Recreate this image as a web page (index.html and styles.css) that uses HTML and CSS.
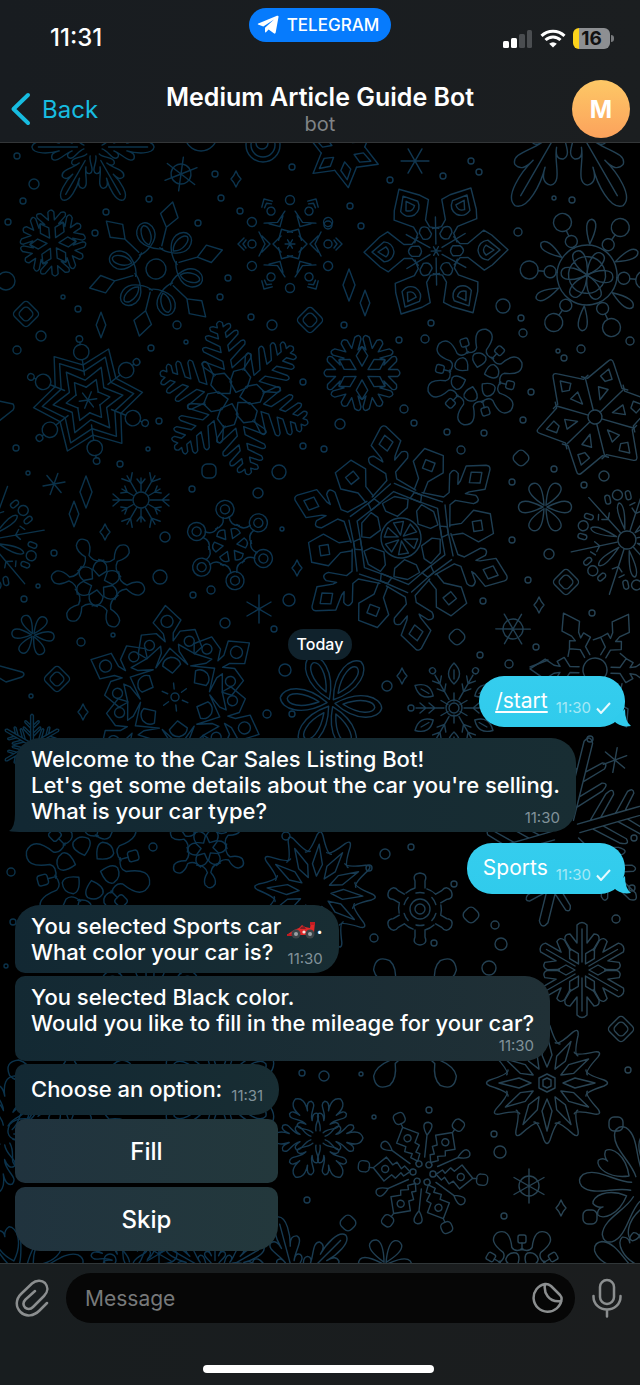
FILE: index.html
```html
<!DOCTYPE html>
<html lang="en">
<head>
<meta charset="utf-8">
<meta name="viewport" content="width=device-width, initial-scale=1">
<title>Medium Article Guide Bot</title>
<link rel="stylesheet" href="styles.css">
</head>
<body>
<div class="app">
  <header class="top">
    <div class="status">
      <span class="clock">11:31</span>
      <a class="island" href="#">
        <svg width="22" height="20" viewBox="0 0 22 20" aria-hidden="true"><path d="M1 9.600Q.2 8.900 1.300 8.500L20 .8Q21.800.2 21.500 2L18.700 17.600Q18.300 19.300 16.800 18.300L11.600 14.500L9 17.300Q8.100 17.900 8 16.600L8 12.800L17 4.500L6.300 11.400Z" fill="#fff"/></svg>
        TELEGRAM
      </a>
      <span class="indicators">
        <svg width="30" height="18" viewBox="0 0 30 18" aria-hidden="true"><rect x="0" y="11" width="6" height="7" rx="1.500" fill="#fff"/><rect x="8" y="8" width="6" height="10" rx="1.500" fill="#fff"/><rect x="16" y="4" width="6" height="14" rx="1.500" fill="#4a4d50"/><rect x="24" y="0" width="5" height="18" rx="1.500" fill="#4a4d50"/></svg>
        <svg width="26" height="19" viewBox="0 0 26 19" aria-hidden="true"><path d="M13 18.500L9.200 14.700A5.400 5.400 0 0 1 16.800 14.700Z" fill="#fff"/><g fill="none" stroke="#fff" stroke-width="3"><path d="M1.500 6.800A16.500 16.500 0 0 1 24.500 6.800"/><path d="M5.500 11A10.700 10.700 0 0 1 20.500 11"/></g></svg>
        <span class="battery">16</span>
      </span>
    </div>
    <nav class="nav">
      <a class="back" href="#"><svg width="22" height="34" viewBox="0 0 22 34" aria-hidden="true"><path d="M18 3L3.500 17L18 31" fill="none" stroke="#17bce0" stroke-width="4" stroke-linecap="round" stroke-linejoin="round"/></svg>Back</a>
      <div class="heading"><h1>Medium Article Guide Bot</h1><p>bot</p></div>
      <button class="avatar" type="button">M</button>
    </nav>
  </header>

  <main class="chat">
    <svg class="wallpaper" viewBox="0 143 640 1120" preserveAspectRatio="xMidYMid slice" aria-hidden="true">
      <defs>
        <linearGradient id="tint" x1="0" y1=".3" x2="1" y2=".6"><stop offset="0" stop-color="#0a3148"/><stop offset=".45" stop-color="#0c3450"/><stop offset=".75" stop-color="#213f52"/><stop offset="1" stop-color="#2a4453"/></linearGradient>

        <!-- small marks -->
        <g id="wheel"><circle r="10"/><path d="M0 0V-17M0 0V17M0 0L15-8.500M0 0L-15 8.500M0 0L-15-8.500M0 0L15 8.500"/></g>
        <g id="aster"><path d="M0-14V14M-12-7L12 7M12-7L-12 7"/></g>
        <path id="spark" d="M0-8Q2-3 5 0Q2 3 0 8Q-2 3-5 0Q-2-3 0-8Z"/>
        <path id="shard" d="M0-16L6 0L0 16L-6 0Z"/>
        <rect id="tile" x="-7" y="-7" width="14" height="14" rx="5"/>
        <g id="gem"><rect x="-10" y="-10" width="20" height="20" rx="4" transform="rotate(45)"/><rect x="-6" y="-6" width="12" height="12" rx="4" transform="rotate(45)"/></g>

        <!-- one arm of each flake, pointing up -->
        <g id="a-chunk"><path d="M-11-20L-7-19L-14-26Q-16-31-10-30L-3-23V-31Q0-35 3-31V-23L10-30Q16-31 14-26L7-19L11-20"/><path transform="rotate(30)" d="M0-6L-5-15L0-23L5-15Z"/></g>
        <g id="a-knot"><path d="M-12-18C-6-18 10-26 9-38C7-51-7-51-9-38C-10-26 6-18 12-18M0-25C7-31 5-44 0-45C-5-44-7-31 0-25Z"/><g transform="rotate(30)"><path d="M0-24V-43M0-43L-9-55L0-69L9-55Z"/></g></g>
        <g id="a-cheron"><circle cy="-38" r="4"/><path d="M-8-28L0-20L8-28M-12-31L0-25M12-31L0-25M-6-46L0-52L6-46M-4-44L0-47L4-44M-8-9L0-17L8-9"/><circle cy="-44" r="4.500" transform="rotate(30)"/></g>
        <g id="a-star"><path d="M-16-28L0-50L16-28M-13-23L0-42L13-23M-9-16L0-32L9-16M-6-10L0-20L6-10M0 0V-8"/><g transform="rotate(30)"><path d="M0-23V-37M0-51V-53"/><circle cy="-44" r="7"/><circle cy="-56" r="3"/></g></g>
        <g id="a-fern"><path d="M14-26L24-36Q27-41 22-41L4-30V-38L21-51Q23-56 18-55L4-47V-53L16-62Q18-67 13-66L4-61V-66L10-70Q12-75 7-74L3-72V-76Q0-80-3-76V-72L-7-74Q-12-75-10-70L-4-66V-61L-13-66Q-18-67-16-62L-4-53V-47L-18-55Q-23-56-21-51L-4-38V-30L-22-41Q-27-41-24-36L-14-26"/><path transform="rotate(30)" d="M0-6L-9-14V-25L0-31L9-25V-14Z"/></g>
        <g id="a-hexstar"><path d="M-11-19L0-38L11-19M0-12L-5-20L0-30L5-20Z"/></g>
        <g id="a-shield"><path d="M-7-24V-32L-20-48L-15-56L0-72L15-56L20-48L7-32V-24L14-18M-7-24L-14-18M0-64L-10-52Q-9-43 0-42Q9-43 10-52ZM0-58L-5-50Q0-45 5-50ZM-5-17Q0-12 5-17V-24Q0-31-5-24Z"/><path transform="rotate(30)" d="M0-7V-34"/></g>
        <g id="a-beads"><circle cy="-37" r="6"/><circle cy="-58" r="9"/><path d="M0-30V-31M0-43V-49M0 0C-8-13-8-26 0-26S8-13 0 0M9-16A18 18 0 0 0-9-16"/><path transform="rotate(30)" d="M0-31Q-9-54 0-56Q9-54 0-31Z"/></g>
        <g id="a-lobe"><path d="M-14-22Q-5-23-5-29Q-13-47 0-49Q13-47 5-29Q5-23 14-22M0-10Q-9-17-6-22Q0-27 6-22Q9-17 0-10Z"/><g transform="rotate(30)"><path d="M0-25V-32"/><rect x="-4" y="-40" width="8" height="8" rx="2"/></g></g>
        <g id="a-point"><path d="M-24-35L-18-35L-3-57Q0-62 3-57L18-35L24-35M0-50L-6-41L0-37L6-41ZM-5-30L0-18L5-30Z"/><path transform="rotate(30)" d="M0-7V-39"/></g>
        <g id="a-fork"><path d="M0-9V-28M-6-28L0-21L6-28"/><path transform="rotate(30)" d="M0-9V-22M-4-21L0-16L4-21"/></g>
        <g id="a-dandelion"><path d="M0-10V-57M-5-32L0-28L5-32M-4-38L-8-34"/><g transform="rotate(30)"><path d="M0-11Q-6-35 0-38Q6-35 0-11Z"/><circle cy="-46" r="5"/><rect x="-13" y="-48" width="5" height="9" rx="2.500"/><rect x="8" y="-48" width="5" height="9" rx="2.500"/></g></g>
        <g id="a-bulb"><path d="M-14-19Q-4-20-2-29Q-8-37-6-43Q0-51 6-43Q8-37 2-29Q4-20 14-19"/><path transform="rotate(30)" d="M0-7L-7-13Q-7-21 0-23Q7-21 7-13Z"/></g>
        <g id="a-ring"><path d="M-12-18Q-3-19-3-28M3-28Q3-19 12-18"/><circle cy="-36" r="9"/><circle cy="-36" r="4.500"/><path transform="rotate(30)" d="M0-7L-5-15Q0-20 5-15Z"/></g>
        <path id="a-petal" d="M0-2Q-9-20-4-25Q0-28 4-25Q9-20 0-2Z"/>
        <g id="a-royal"><path d="M-5-59V-66L-19-78Q-22-86-14-85L-6-78L-7-82L-15-96L-3-112Q0-115 3-112L15-96L7-82L6-78L14-85Q22-86 19-78L5-66V-59L22-45M-5-59L-22-45M0-104L-7-96L0-88L7-96ZM-2-55L-27-39L-25-32L0-47L25-32L27-39L2-55"/><path d="M0-22L-11-29L-13-37L0-42L13-37L11-29ZM0-3L-5-16H5Z"/><path transform="rotate(30)" d="M-5-50V-62L-16-76L-10-92H10L16-76L5-62V-50M-5-82H5V-73H-5Z"/></g>
        <g id="a-crown"><path d="M0-49L-16-31L-9-45V-52L-24-41L-32-47L-27-65L-12-65L-4-56L-5-64L-14-76L0-92L14-76L5-64L4-56L12-65L27-65L32-47L24-41L9-52V-45L16-31ZM0-24L-9-32Q-8-39 0-40Q8-39 9-32ZM0-8V-14"/><circle cy="-76" r="6"/><circle cx="-20" cy="-54" r="5"/><circle cx="20" cy="-54" r="5"/></g>
        <path id="a-bloom" d="M0-4C-17-28-11-49 0-51C11-49 17-28 0-4ZM0-12C-9-30-6-43 0-44C6-43 9-30 0-12Z"/>
        <g id="a-leaf"><path d="M0-24Q-11-34 0-45Q11-34 0-24ZM0-29V-38M0-7V-15"/><path transform="rotate(30)" d="M0-10V-38M-5-34L0-28L5-34M-5-25L0-19L5-25"/><circle cy="-43" r="3" transform="rotate(30)"/></g>
        <g id="a-block"><path d="M-3-16V-25L-12-31L-8-38L-3-35L-4-41L-10-50L0-65L10-50L4-41L3-35L8-38L12-31L3-25V-16M-12-31L-17-25"/></g>
        <g id="a-gear"><path d="M-5-21V-28Q-8-35 0-36Q8-35 5-28V-21M-5-21A22 22 0 0 0-14-16M-4-16A17 17 0 0 1 4-16"/></g>
        <g id="a-spike"><path d="M-4-12V-34L-21-51Q-28-53-23-44L-4-24M4-12V-34L21-51Q28-53 23-44L4-24M-4-34V-57L-17-69Q-22-70-20-64L-4-48M4-34V-57L17-69Q22-70 20-64L4-48M-4-57V-84Q0-92 4-84V-57"/></g>
        <g id="a-bar"><path d="M-11-20L-17-30Q-18-36-12-36L-5-27V-45Q0-50 5-45V-27L12-36Q18-36 17-30L11-20M0-8V-41"/><path transform="rotate(30)" d="M0-7L-5-16L0-25L5-16Z"/></g>
        <g id="a-twelve"><path d="M-13-39Q-9-38-3-57Q0-64 3-57Q9-38 13-39M0-16L-5-28L0-48L5-28Z"/></g>
        <g id="a-oak"><path d="M-3-14C-6-24-22-30-16-38Q-10-42-6-32C-10-44-26-56-18-63Q-9-66-6-52C-10-66-12-92 0-94C12-92 10-66 6-52Q9-66 18-63C26-56 10-44 6-32Q10-42 16-38C22-30 6-24 3-14M0-24V-84"/></g>
        <g id="a-plume"><path d="M-2-8C-5-17-15-18-13-24Q-9-28-4-20C-6-30-18-32-14-39Q-9-42-5-32Q-10-47 0-50Q10-47 5-32Q9-42 14-39C18-32 6-30 4-20Q9-28 13-24C15-18 5-17 2-8"/></g>
        <g id="a-totem"><circle cy="-10" r="3"/><path d="M0-13L-5-19L-2-22L-8-27L-5-31L-12-38L0-50L12-38L5-31L8-27L2-22L5-19ZM0-50V-54"/><circle cy="-38" r="3.500"/><rect x="-5" y="-65" width="11" height="11" rx="4"/><path transform="rotate(30)" d="M0-16V-38M0-38Q-8-50 0-51Q8-50 0-38Z"/></g>
        <g id="a-drop"><path d="M-4-14C-2-30-15-50-6-63Q0-69 6-63C15-50 2-30 4-14"/><path transform="rotate(30)" d="M0-20C-15-35-13-52-6-54Q0-52-1-46Q0-52 6-54C13-52 15-35 0-20Z"/></g>

        <!-- six-fold and twelve-fold flakes -->
        <g id="f-chunk"><use href="#a-chunk"/><use href="#a-chunk" transform="rotate(60)"/><use href="#a-chunk" transform="rotate(120)"/><use href="#a-chunk" transform="rotate(180)"/><use href="#a-chunk" transform="rotate(240)"/><use href="#a-chunk" transform="rotate(300)"/></g>
        <g id="f-knot"><circle r="10"/><use href="#a-knot"/><use href="#a-knot" transform="rotate(60)"/><use href="#a-knot" transform="rotate(120)"/><use href="#a-knot" transform="rotate(180)"/><use href="#a-knot" transform="rotate(240)"/><use href="#a-knot" transform="rotate(300)"/></g>
        <g id="f-cheron"><use href="#aster" transform="scale(.35)"/><use href="#a-cheron"/><use href="#a-cheron" transform="rotate(60)"/><use href="#a-cheron" transform="rotate(120)"/><use href="#a-cheron" transform="rotate(180)"/><use href="#a-cheron" transform="rotate(240)"/><use href="#a-cheron" transform="rotate(300)"/></g>
        <g id="f-star"><use href="#a-star"/><use href="#a-star" transform="rotate(60)"/><use href="#a-star" transform="rotate(120)"/><use href="#a-star" transform="rotate(180)"/><use href="#a-star" transform="rotate(240)"/><use href="#a-star" transform="rotate(300)"/></g>
        <g id="f-fern"><use href="#a-fern"/><use href="#a-fern" transform="rotate(60)"/><use href="#a-fern" transform="rotate(120)"/><use href="#a-fern" transform="rotate(180)"/><use href="#a-fern" transform="rotate(240)"/><use href="#a-fern" transform="rotate(300)"/></g>
        <g id="f-hexstar"><use href="#a-hexstar"/><use href="#a-hexstar" transform="rotate(60)"/><use href="#a-hexstar" transform="rotate(120)"/><use href="#a-hexstar" transform="rotate(180)"/><use href="#a-hexstar" transform="rotate(240)"/><use href="#a-hexstar" transform="rotate(300)"/></g>
        <g id="f-shield"><use href="#aster" transform="scale(.35)"/><use href="#a-shield"/><use href="#a-shield" transform="rotate(60)"/><use href="#a-shield" transform="rotate(120)"/><use href="#a-shield" transform="rotate(180)"/><use href="#a-shield" transform="rotate(240)"/><use href="#a-shield" transform="rotate(300)"/></g>
        <g id="f-beads"><circle r="30"/><use href="#a-beads"/><use href="#a-beads" transform="rotate(60)"/><use href="#a-beads" transform="rotate(120)"/><use href="#a-beads" transform="rotate(180)"/><use href="#a-beads" transform="rotate(240)"/><use href="#a-beads" transform="rotate(300)"/></g>
        <g id="f-lobe"><use href="#a-lobe"/><use href="#a-lobe" transform="rotate(60)"/><use href="#a-lobe" transform="rotate(120)"/><use href="#a-lobe" transform="rotate(180)"/><use href="#a-lobe" transform="rotate(240)"/><use href="#a-lobe" transform="rotate(300)"/></g>
        <g id="f-point"><circle r="7"/><use href="#a-point"/><use href="#a-point" transform="rotate(60)"/><use href="#a-point" transform="rotate(120)"/><use href="#a-point" transform="rotate(180)"/><use href="#a-point" transform="rotate(240)"/><use href="#a-point" transform="rotate(300)"/></g>
        <g id="f-fork"><circle r="8"/><use href="#a-fork"/><use href="#a-fork" transform="rotate(60)"/><use href="#a-fork" transform="rotate(120)"/><use href="#a-fork" transform="rotate(180)"/><use href="#a-fork" transform="rotate(240)"/><use href="#a-fork" transform="rotate(300)"/></g>
        <g id="f-dandelion"><circle r="9"/><use href="#a-dandelion"/><use href="#a-dandelion" transform="rotate(60)"/><use href="#a-dandelion" transform="rotate(120)"/><use href="#a-dandelion" transform="rotate(180)"/><use href="#a-dandelion" transform="rotate(240)"/><use href="#a-dandelion" transform="rotate(300)"/></g>
        <g id="f-bulb"><use href="#a-bulb"/><use href="#a-bulb" transform="rotate(60)"/><use href="#a-bulb" transform="rotate(120)"/><use href="#a-bulb" transform="rotate(180)"/><use href="#a-bulb" transform="rotate(240)"/><use href="#a-bulb" transform="rotate(300)"/></g>
        <g id="f-ring"><use href="#a-ring"/><use href="#a-ring" transform="rotate(60)"/><use href="#a-ring" transform="rotate(120)"/><use href="#a-ring" transform="rotate(180)"/><use href="#a-ring" transform="rotate(240)"/><use href="#a-ring" transform="rotate(300)"/></g>
        <g id="f-petal"><use href="#a-petal"/><use href="#a-petal" transform="rotate(60)"/><use href="#a-petal" transform="rotate(120)"/><use href="#a-petal" transform="rotate(180)"/><use href="#a-petal" transform="rotate(240)"/><use href="#a-petal" transform="rotate(300)"/></g>
        <g id="f-royal"><circle r="20"/><use href="#a-royal"/><use href="#a-royal" transform="rotate(60)"/><use href="#a-royal" transform="rotate(120)"/><use href="#a-royal" transform="rotate(180)"/><use href="#a-royal" transform="rotate(240)"/><use href="#a-royal" transform="rotate(300)"/></g>
        <g id="f-crown"><circle r="4"/><use href="#a-crown"/><use href="#a-crown" transform="rotate(60)"/><use href="#a-crown" transform="rotate(120)"/><use href="#a-crown" transform="rotate(180)"/><use href="#a-crown" transform="rotate(240)"/><use href="#a-crown" transform="rotate(300)"/></g>
        <g id="f-bloom"><use href="#a-bloom"/><use href="#a-bloom" transform="rotate(60)"/><use href="#a-bloom" transform="rotate(120)"/><use href="#a-bloom" transform="rotate(180)"/><use href="#a-bloom" transform="rotate(240)"/><use href="#a-bloom" transform="rotate(300)"/></g>
        <g id="f-leaf"><circle r="8"/><circle r="5"/><use href="#a-leaf"/><use href="#a-leaf" transform="rotate(60)"/><use href="#a-leaf" transform="rotate(120)"/><use href="#a-leaf" transform="rotate(180)"/><use href="#a-leaf" transform="rotate(240)"/><use href="#a-leaf" transform="rotate(300)"/></g>
        <g id="f-block"><circle r="12"/><use href="#a-block"/><use href="#a-block" transform="rotate(60)"/><use href="#a-block" transform="rotate(120)"/><use href="#a-block" transform="rotate(180)"/><use href="#a-block" transform="rotate(240)"/><use href="#a-block" transform="rotate(300)"/></g>
        <g id="f-gear"><circle r="10"/><circle r="5"/><use href="#a-gear"/><use href="#a-gear" transform="rotate(60)"/><use href="#a-gear" transform="rotate(120)"/><use href="#a-gear" transform="rotate(180)"/><use href="#a-gear" transform="rotate(240)"/><use href="#a-gear" transform="rotate(300)"/></g>
        <g id="f-spike"><use href="#a-spike"/><use href="#a-spike" transform="rotate(60)"/><use href="#a-spike" transform="rotate(120)"/><use href="#a-spike" transform="rotate(180)"/><use href="#a-spike" transform="rotate(240)"/><use href="#a-spike" transform="rotate(300)"/></g>
        <g id="f-bar"><use href="#a-bar"/><use href="#a-bar" transform="rotate(60)"/><use href="#a-bar" transform="rotate(120)"/><use href="#a-bar" transform="rotate(180)"/><use href="#a-bar" transform="rotate(240)"/><use href="#a-bar" transform="rotate(300)"/></g>
        <g id="half-twelve"><use href="#a-twelve"/><use href="#a-twelve" transform="rotate(60)"/><use href="#a-twelve" transform="rotate(120)"/><use href="#a-twelve" transform="rotate(180)"/><use href="#a-twelve" transform="rotate(240)"/><use href="#a-twelve" transform="rotate(300)"/></g>
        <g id="f-twelve"><path d="M0-9L8-5V5L0 9L-8 5V-5ZM0-5L4-3V3L0 5L-4 3V-3Z"/><use href="#half-twelve"/><use href="#half-twelve" transform="rotate(30)"/></g>
        <g id="f-oak"><use href="#a-oak"/><use href="#a-oak" transform="rotate(60)"/><use href="#a-oak" transform="rotate(120)"/><use href="#a-oak" transform="rotate(180)"/><use href="#a-oak" transform="rotate(240)"/><use href="#a-oak" transform="rotate(300)"/></g>
        <g id="f-plume"><use href="#a-plume"/><use href="#a-plume" transform="rotate(60)"/><use href="#a-plume" transform="rotate(120)"/><use href="#a-plume" transform="rotate(180)"/><use href="#a-plume" transform="rotate(240)"/><use href="#a-plume" transform="rotate(300)"/></g>
        <g id="f-totem"><use href="#a-totem"/><use href="#a-totem" transform="rotate(60)"/><use href="#a-totem" transform="rotate(120)"/><use href="#a-totem" transform="rotate(180)"/><use href="#a-totem" transform="rotate(240)"/><use href="#a-totem" transform="rotate(300)"/></g>
        <g id="f-drop"><use href="#a-drop"/><use href="#a-drop" transform="rotate(60)"/><use href="#a-drop" transform="rotate(120)"/><use href="#a-drop" transform="rotate(180)"/><use href="#a-drop" transform="rotate(240)"/><use href="#a-drop" transform="rotate(300)"/></g>

        <mask id="flakes" maskUnits="userSpaceOnUse" x="0" y="143" width="640" height="1120">
          <g class="ink">
            <use href="#f-oak" transform="translate(93 147) rotate(30) scale(.65)"/>
            <use href="#f-chunk" transform="translate(53 243) rotate(-4)"/>
            <use href="#f-knot" transform="translate(156 269) rotate(-16)"/>
            <use href="#f-cheron" transform="translate(290 244) rotate(30)"/>
            <use href="#f-star" transform="translate(88 400) rotate(22) scale(1.1)"/>
            <use href="#f-fern" transform="translate(234 398) rotate(-11)"/>
            <use href="#f-hexstar" transform="translate(343 150) rotate(-8)"/>
            <use href="#f-shield" transform="translate(436 251) rotate(29)"/>
            <use href="#f-oak" transform="translate(569 112) rotate(30) scale(1.150)"/>
            <use href="#f-beads" transform="translate(587 275) rotate(35)"/>
            <use href="#f-chunk" transform="translate(362 373) rotate(30) scale(1.150)"/>
            <use href="#f-lobe" transform="translate(475 377) rotate(13)"/>
            <use href="#f-point" transform="translate(595 417) rotate(16)"/>
            <use href="#f-fork" transform="translate(141 500) rotate(30)"/>
            <use href="#f-dandelion" transform="translate(-12 540) rotate(20)"/>
            <use href="#f-dandelion" transform="translate(627 540) rotate(18)"/>
            <use href="#f-bulb" transform="translate(98 583) rotate(-22)"/>
            <use href="#f-ring" transform="translate(230 545) rotate(-8)"/>
            <use href="#f-petal" transform="translate(33 635) rotate(35) scale(.8)"/>
            <use href="#f-petal" transform="translate(545 507) rotate(30)"/>
            <use href="#f-royal" transform="translate(401 538) rotate(-9)"/>
            <use href="#f-crown" transform="translate(175 697) rotate(-6)"/>
            <use href="#f-bloom" transform="translate(331 703) rotate(-24)"/>
            <use href="#f-leaf" transform="translate(454 708)"/>
            <use href="#f-block" transform="translate(595 670) rotate(31)"/>
            <use href="#f-spike" transform="translate(32 745) scale(.35)"/>
            <use href="#f-lobe" transform="translate(88 868) rotate(45) scale(1.300)"/>
            <use href="#f-bulb" transform="translate(207 848) rotate(-5) scale(.85)"/>
            <use href="#half-twelve" transform="translate(315 892) rotate(5)"/>
            <use href="#half-twelve" transform="translate(315 892) rotate(35)"/>
            <use href="#f-gear" transform="translate(420 909)"/>
            <use href="#f-spike" transform="translate(566 832) rotate(14) scale(1.100)"/>
            <use href="#f-bar" transform="translate(582 970)"/>
            <use href="#f-bulb" transform="translate(415 1023) rotate(30) scale(1.550)"/>
            <use href="#f-twelve" transform="translate(547 1083)"/>
            <use href="#f-plume" transform="translate(318 1138) rotate(30) scale(.9)"/>
            <use href="#f-totem" transform="translate(423 1173) rotate(36)"/>
            <use href="#f-drop" transform="translate(645 1188) rotate(-23)"/>
            <use href="#f-lobe" transform="translate(522 1275) rotate(30)"/>
            <use href="#f-petal" transform="translate(385 1264) rotate(32)"/>
            <use href="#f-oak" transform="translate(296 1285) rotate(45) scale(.75)"/>
            <use href="#f-plume" transform="translate(4 1135) rotate(10) scale(1.200)"/>
            <use href="#f-drop" transform="translate(20 1280) rotate(12)"/>
            <use href="#f-plume" transform="translate(130 1270) rotate(10)"/>
            <use href="#f-oak" transform="translate(215 1275) scale(.6)"/>
            <use href="#f-drop" transform="translate(648 1285) rotate(8)"/>
            <use href="#f-bulb" transform="translate(70 1100) scale(1.500)"/>
            <use href="#f-bloom" transform="translate(220 1090) scale(1.200)"/>
            <use href="#f-ring" transform="translate(150 960) scale(1.200)"/>
            <use href="#wheel" transform="translate(181 174) rotate(8)"/>
            <use href="#wheel" transform="translate(513 629) rotate(30)"/>
            <use href="#wheel" transform="translate(529 1186)"/>
            <use href="#aster" transform="translate(415 161) rotate(30)"/>
            <use href="#aster" transform="translate(54 484) rotate(20) scale(.8)"/>
            <use href="#aster" transform="translate(259 609)"/>
            <use href="#aster" transform="translate(615 760) rotate(10) scale(.9)"/>
            <use href="#aster" transform="translate(159 1254)"/>
            <use href="#spark" transform="translate(236 179)"/>
            <use href="#spark" transform="translate(105 532)"/>
            <use href="#spark" transform="translate(297 568)"/>
            <use href="#spark" transform="translate(539 605)"/>
            <use href="#spark" transform="translate(83 712)"/>
            <use href="#spark" transform="translate(402 676)"/>
            <use href="#spark" transform="translate(561 1208)"/>
            <use href="#shard" transform="translate(101 325) scale(.8)"/>
            <use href="#shard" transform="translate(349 285)"/>
            <use href="#shard" transform="translate(365 303) scale(.8)"/>
            <use href="#shard" transform="translate(86 492)"/>
            <use href="#shard" transform="translate(74 514) scale(.8)"/>
            <use href="#gem" transform="translate(26 314)"/>
            <use href="#gem" transform="translate(310 320)"/>
            <use href="#gem" transform="translate(566 582)"/>
            <use href="#gem" transform="translate(57 679)"/>
            <use href="#gem" transform="translate(621 1029)"/>
            <use href="#tile" transform="translate(209 471)"/>
            <use href="#tile" transform="translate(521 458) rotate(45)"/>
            <use href="#tile" transform="translate(457 637) rotate(45)"/>
            <use href="#tile" transform="translate(471 915) rotate(45)"/>
            <use href="#tile" transform="translate(616 1124)"/>
            <use href="#tile" transform="translate(348 1223) rotate(45)"/>
            <use href="#tile" transform="translate(590 1217)"/>
            <path d="M-6 400L13 404Q15 407 13 410L-6 425M-4 665L22 672Q26 674 22 677L6 682L-4 676M530 667L548 660"/>
            <circle cx="201" cy="135" r="16"/><circle cx="263" cy="145" r="17"/><circle cx="263" cy="145" r="12"/><circle cx="262" cy="143" r="6"/>
            <circle cx="6" cy="281" r="9"/><circle cx="34" cy="184" r="5"/><circle cx="17" cy="156" r="3"/><circle cx="23" cy="201" r="3"/><circle cx="8" cy="222" r="3"/><circle cx="106" cy="212" r="3"/><circle cx="95" cy="233" r="3"/><circle cx="149" cy="199" r="3"/><circle cx="215" cy="174" r="3"/><circle cx="221" cy="198" r="3"/><circle cx="292" cy="167" r="3"/><circle cx="198" cy="223" r="3"/><circle cx="240" cy="211" r="3"/><circle cx="228" cy="278" r="3"/><circle cx="220" cy="297" r="3"/><circle cx="78" cy="309" r="3"/><circle cx="63" cy="297" r="2"/><circle cx="41" cy="336" r="5"/><circle cx="17" cy="350" r="4"/><circle cx="177" cy="325" r="4"/><circle cx="151" cy="348" r="3"/><circle cx="186" cy="342" r="2"/><circle cx="272" cy="325" r="5"/><circle cx="251" cy="317" r="3"/><circle cx="303" cy="382" r="3"/>
            <circle cx="390" cy="180" r="3"/><circle cx="443" cy="176" r="3"/><circle cx="471" cy="161" r="3"/><circle cx="479" cy="172" r="3"/><circle cx="350" cy="206" r="3"/><circle cx="328" cy="225" r="4"/><circle cx="361" cy="226" r="3"/><circle cx="554" cy="198" r="2"/><circle cx="572" cy="200" r="3"/><circle cx="518" cy="232" r="4"/><circle cx="503" cy="306" r="7"/><circle cx="521" cy="318" r="3"/><circle cx="523" cy="333" r="4"/><circle cx="431" cy="323" r="3"/><circle cx="425" cy="339" r="4"/><circle cx="399" cy="340" r="3"/><circle cx="344" cy="325" r="3"/><circle cx="581" cy="349" r="4"/><circle cx="558" cy="351" r="2"/><circle cx="564" cy="358" r="3"/><circle cx="630" cy="341" r="4"/><circle cx="531" cy="392" r="3"/>
            <circle cx="16" cy="448" r="3"/><circle cx="28" cy="473" r="2"/><circle cx="159" cy="421" r="3"/><circle cx="120" cy="464" r="3"/><circle cx="148" cy="449" r="2"/><circle cx="279" cy="472" r="7"/><circle cx="258" cy="493" r="5"/><circle cx="192" cy="489" r="3"/><circle cx="303" cy="446" r="3"/><circle cx="165" cy="537" r="5"/><circle cx="160" cy="577" r="7"/><circle cx="54" cy="553" r="3"/><circle cx="24" cy="599" r="3"/><circle cx="38" cy="586" r="2"/><circle cx="211" cy="590" r="4"/><circle cx="193" cy="595" r="3"/><circle cx="225" cy="623" r="5"/><circle cx="289" cy="600" r="6"/><circle cx="274" cy="629" r="3"/><circle cx="81" cy="642" r="4"/><circle cx="113" cy="635" r="2"/><circle cx="282" cy="529" r="2"/>
            <circle cx="340" cy="424" r="5"/><circle cx="404" cy="409" r="4"/><circle cx="414" cy="423" r="3"/><circle cx="447" cy="432" r="3"/><circle cx="484" cy="433" r="3"/><circle cx="461" cy="450" r="4"/><circle cx="523" cy="420" r="3"/><circle cx="324" cy="449" r="3"/><circle cx="554" cy="469" r="3"/><circle cx="512" cy="482" r="3"/><circle cx="604" cy="476" r="5"/><circle cx="584" cy="485" r="3"/><circle cx="512" cy="540" r="3"/><circle cx="549" cy="554" r="5"/><circle cx="528" cy="580" r="3"/><circle cx="483" cy="601" r="3"/><circle cx="592" cy="613" r="3"/><circle cx="536" cy="647" r="3"/><circle cx="480" cy="655" r="3"/>
            <circle cx="31" cy="696" r="2"/><circle cx="285" cy="670" r="6"/><circle cx="267" cy="714" r="4"/><circle cx="292" cy="714" r="3"/><circle cx="387" cy="686" r="5"/><circle cx="509" cy="664" r="4"/><circle cx="590" cy="739" r="3"/><circle cx="634" cy="838" r="3"/><circle cx="385" cy="854" r="5"/><circle cx="411" cy="847" r="3"/><circle cx="369" cy="868" r="3"/><circle cx="454" cy="884" r="3"/><circle cx="632" cy="888" r="3"/><circle cx="153" cy="847" r="4"/><circle cx="286" cy="836" r="4"/><circle cx="11" cy="872" r="4"/><circle cx="13" cy="922" r="3"/><circle cx="6" cy="966" r="2"/><circle cx="374" cy="938" r="4"/><circle cx="434" cy="943" r="3"/><circle cx="495" cy="925" r="4"/><circle cx="501" cy="944" r="6"/><circle cx="489" cy="968" r="7"/><circle cx="616" cy="919" r="4"/><circle cx="628" cy="1070" r="3"/><circle cx="302" cy="1073" r="3"/><circle cx="324" cy="1076" r="5"/><circle cx="361" cy="1074" r="2"/><circle cx="429" cy="1110" r="3"/><circle cx="374" cy="1117" r="2"/><circle cx="494" cy="1134" r="3"/><circle cx="500" cy="1152" r="6"/><circle cx="307" cy="1200" r="3"/><circle cx="504" cy="1216" r="3"/><circle cx="110" cy="1260" r="6"/>
          </g>
        </mask>
      </defs>
      <rect x="0" y="143" width="640" height="1120" fill="url(#tint)" mask="url(#flakes)"/>
    </svg>

    <div class="feed">
      <span class="day">Today</span>

      <article class="bubble mine">
        <a class="command" href="#">/start</a>
        <span class="meta"><time>11:30</time><svg width="15" height="12" viewBox="0 0 15 12" aria-hidden="true"><path d="M1 6.500L5 11L14 1"/></svg></span>
        <svg class="tail" width="20" height="18" viewBox="0 0 20 18" aria-hidden="true"><path d="M14 0Q14 13 20 17Q9 19 2 11Z"/></svg>
      </article>

      <article class="bubble theirs wide-gap tailed">
        <p>Welcome to the Car Sales Listing Bot!<br>Let's get some details about the car you're selling.<br>What is your car type?</p>
        <time>11:30</time>
        <svg class="tail" width="20" height="18" viewBox="0 0 20 18" aria-hidden="true"><path d="M6 0Q6 14 0 17Q4 18 16 18V0Z"/></svg>
      </article>

      <article class="bubble mine wide-gap">
        <span>Sports</span>
        <span class="meta"><time>11:30</time><svg width="15" height="12" viewBox="0 0 15 12" aria-hidden="true"><path d="M1 6.500L5 11L14 1"/></svg></span>
        <svg class="tail" width="20" height="18" viewBox="0 0 20 18" aria-hidden="true"><path d="M14 0Q14 13 20 17Q9 19 2 11Z"/></svg>
      </article>

      <article class="bubble theirs wide-gap joined">
        <p>You selected Sports car <svg class="car" width="29" height="18" viewBox="0 0 29 18" role="img" aria-label="racing car"><path d="M1 13L7 9L12 7L15 4L18 6L23 7L24 1H28L27 12L22 14H3Z" fill="#e02828"/><path d="M23 1H28V4H23ZM0 13H8L7 15H0Z" fill="#c11c22"/><path d="M14 6L17 5L19 8H13Z" fill="#7c2026"/><circle cx="9" cy="13" r="4.500" fill="#3c4448"/><circle cx="9" cy="13" r="2" fill="#9aa2a6"/><circle cx="23" cy="13" r="4.500" fill="#3c4448"/><circle cx="23" cy="13" r="2" fill="#9aa2a6"/><circle cx="17" cy="11" r="1.600" fill="#f4e4e2"/></svg>.<br>What color your car is?</p>
        <time>11:30</time>
      </article>

      <article class="bubble theirs joined stacked">
        <p>You selected Black color.<br>Would you like to fill in the mileage for your car?</p>
        <time>11:30</time>
      </article>

      <article class="bubble theirs joined inline">
        <p>Choose an option:</p>
        <time>11:31</time>
      </article>

      <div class="options">
        <button type="button">Fill</button>
        <button type="button">Skip</button>
      </div>
    </div>
  </main>

  <footer class="composer">
    <form class="entry">
      <button class="tool" type="button" aria-label="Attach"><svg width="34" height="38" viewBox="0 0 34 38" aria-hidden="true"><path d="M32 24L24.500 31.500C19 37 11 38.500 5.500 33C0 27.500 1 20 6 15L17 4.500C21 1 27 1 30 4C33.500 8 33 13 29 17L18 28C15.500 30.500 12 30.500 10 28.500C8 26 8 23 10.500 20.500L20 12"/></svg></button>
      <div class="field">
        <input type="text" placeholder="Message" aria-label="Message">
        <button class="tool" type="button" aria-label="Stickers"><svg width="32" height="32" viewBox="0 0 32 32" aria-hidden="true"><path d="M13 2A14 14 0 1 0 29.500 17.500Q30 15.500 28 13L19 4Q16 1.500 13 2ZM13 2C11.500 10 16 21 29.500 19"/></svg></button>
      </div>
      <button class="tool" type="button" aria-label="Record voice"><svg width="30" height="40" viewBox="0 0 30 40" aria-hidden="true"><rect x="8" y="2" width="14" height="24" rx="7"/><path d="M1.500 18V19A13.500 12.500 0 0 0 28.500 19V18M15 32V38.500"/></svg></button>
    </form>
    <div class="home"></div>
  </footer>
</div>
</body>
</html>
```
FILE: styles.css
```css
* { box-sizing: border-box; }

body {
  margin: 0;
  background: #000;
  color: #fff;
  font-family: Inter, "Liberation Sans", sans-serif;
}

button, input { font: inherit; color: inherit; }
button { border: 0; padding: 0; background: none; }
a { color: inherit; text-decoration: none; }
svg { display: block; flex: none; }
h1, p { margin: 0; }

.app {
  display: flex;
  flex-direction: column;
  min-height: 100vh;
}

/* top bar */
.top {
  background: linear-gradient(90deg, #181c20, #1b1e20);
  border-bottom: 1px solid #333638;
  padding: 8px 10px 2px;
}
.status {
  display: grid;
  grid-template-columns: 1fr auto 1fr;
  align-items: start;
  height: 70px;
}
.clock {
  padding: 16px 0 0 40px;
  font-size: 24px;
  line-height: 28px;
  font-weight: 500;
}
.island {
  display: flex;
  align-items: center;
  gap: 8px;
  height: 34px;
  padding: 0 12px 0 8px;
  border-radius: 17px;
  background: #067bfd;
  font-size: 17px;
  font-weight: 500;
}
.indicators {
  display: flex;
  align-items: center;
  justify-content: flex-end;
  gap: 7px;
  padding: 20px 20px 0 0;
}
.battery {
  position: relative;
  width: 37px;
  height: 21px;
  border-radius: 6px;
  background: linear-gradient(90deg, #fcd31c 6px, #8d8f92 6px);
  color: #111;
  font-size: 19px;
  line-height: 21px;
  font-weight: 700;
  text-align: center;
}
.battery::after {
  content: "";
  position: absolute;
  right: -4px;
  top: 7px;
  width: 3px;
  height: 7px;
  border-radius: 0 3px 3px 0;
  background: #77797c;
}
.nav {
  display: grid;
  grid-template-columns: 1fr auto 1fr;
  align-items: center;
  height: 62px;
}
.back {
  display: flex;
  align-items: center;
  gap: 10px;
  color: #17bce0;
  font-size: 24px;
}
.heading { text-align: center; }
.heading h1 {
  font-size: 25px;
  line-height: 30px;
  font-weight: 600;
}
.heading p {
  color: #808487;
  font-size: 20px;
  line-height: 24px;
}
.avatar {
  justify-self: end;
  width: 58px;
  height: 58px;
  border-radius: 50%;
  background: linear-gradient(#fdc866, #fca25c);
  font-size: 24px;
  font-weight: 700;
}

/* conversation */
.chat {
  position: relative;
  flex: 1;
  display: flex;
  flex-direction: column;
  justify-content: flex-end;
  overflow: hidden;
}
.wallpaper {
  position: absolute;
  inset: 0;
  width: 100%;
  height: 100%;
}
.ink {
  fill: none;
  stroke: #fff;
  stroke-width: 1.4px;
  stroke-linejoin: round;
  stroke-linecap: round;
}
.wallpaper path, .wallpaper circle, .wallpaper rect { vector-effect: non-scaling-stroke; }
.feed {
  position: relative;
  display: flex;
  flex-direction: column;
  align-items: flex-start;
  padding: 16px 15px 12px;
}
.day {
  align-self: center;
  margin-bottom: 16px;
  padding: 0 9px;
  border-radius: 16px;
  background: #10222c;
  font-size: 16px;
  line-height: 31px;
  font-weight: 500;
}
.bubble {
  position: relative;
  max-width: 92%;
  padding: 8px 16px;
  border-radius: 25px;
  font-size: 22px;
  line-height: 26px;
}
.wide-gap { margin-top: 11px; }
.bubble time {
  font-size: 15px;
  line-height: 18px;
}
.mine {
  align-self: flex-end;
  display: flex;
  gap: 8px;
  padding: 12px 14px 13px 16px;
  background: linear-gradient(#35cdee, #30cbec);
  font-size: 21px;
}
.command { text-decoration: underline; text-underline-offset: 3px; text-decoration-thickness: 2px; }
.meta {
  display: flex;
  align-items: center;
  align-self: flex-end;
  gap: 5px;
  margin-bottom: -3px;
  color: #a5e8f6;
}
.meta svg { fill: none; stroke: #e6fafe; stroke-width: 2; }
.theirs {
  display: grid;
  background: linear-gradient(90deg, #122833, #182d33);
  font-weight: 500;
}
.theirs p, .theirs time { grid-area: 1 / 1; }
.theirs time {
  place-self: end;
  margin-bottom: -3px;
  color: #81929a;
  font-weight: 400;
}
.tailed { border-bottom-left-radius: 6px; }
.joined { border-bottom-left-radius: 10px; margin-bottom: 3px; }
.joined + .joined { border-top-left-radius: 10px; }
.stacked {
  padding-bottom: 6px;
  background: linear-gradient(90deg, #132933, #203036);
}
.stacked time { grid-area: 2 / 1; margin: 1px 0 0; }
.inline {
  grid-template-columns: auto auto;
  gap: 9px;
  padding: 12px 16px 13px;
}
.inline time { grid-area: 1 / 2; }
.car { display: inline-block; vertical-align: -5px; }
.tail {
  position: absolute;
  bottom: 0;
}
.mine .tail { right: -6px; fill: #30cbec; }
.theirs .tail { left: -6px; fill: #122833; }

.options {
  display: flex;
  flex-direction: column;
  gap: 4px;
  width: 263px;
  margin-top: 1px;
}
.options button {
  height: 64px;
  border-radius: 10px;
  background: linear-gradient(90deg, #20333e, #23383c);
  font-size: 24px;
  font-weight: 500;
}
.options button:last-child { border-radius: 10px 10px 25px 25px; }

/* message box */
.composer {
  background: linear-gradient(90deg, #181d1f, #1b1d1e);
  border-top: 1px solid #303638;
  padding: 9px 18px 12px 15px;
}
.entry {
  display: flex;
  align-items: center;
  gap: 17px;
}
.tool svg {
  fill: none;
  stroke: #8b8e8f;
  stroke-width: 2.5px;
  stroke-linecap: round;
  stroke-linejoin: round;
}
.field {
  flex: 1;
  display: flex;
  align-items: center;
  height: 50px;
  padding: 0 11px 0 19px;
  border-radius: 25px;
  background: #060606;
}
.field input {
  flex: 1;
  min-width: 0;
  border: 0;
  padding: 0;
  outline: 0;
  background: none;
  font-size: 21px;
}
.field input::placeholder { color: #77797a; opacity: 1; }
.home {
  width: 38%;
  height: 8px;
  margin: 42px auto 0;
  border-radius: 4px;
  background: #fff;
}
```
